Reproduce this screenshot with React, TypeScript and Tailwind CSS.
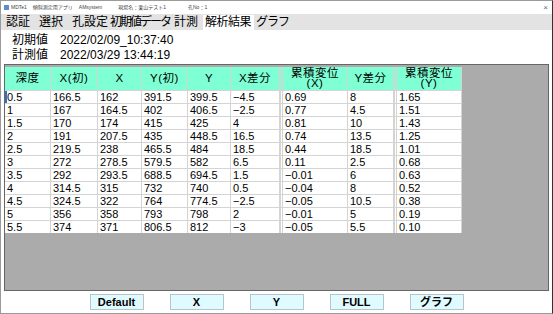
const rows = [
  ["0.5", "166.5", "162", "391.5", "399.5", "−4.5", "0.69", "8", "1.65"],
  ["1", "167", "164.5", "402", "406.5", "−2.5", "0.77", "4.5", "1.51"],
  ["1.5", "170", "174", "415", "425", "4", "0.81", "10", "1.43"],
  ["2", "191", "207.5", "435", "448.5", "16.5", "0.74", "13.5", "1.25"],
  ["2.5", "219.5", "238", "465.5", "484", "18.5", "0.44", "18.5", "1.01"],
  ["3", "272", "278.5", "579.5", "582", "6.5", "0.11", "2.5", "0.68"],
  ["3.5", "292", "293.5", "688.5", "694.5", "1.5", "−0.01", "6", "0.63"],
  ["4", "314.5", "315", "732", "740", "0.5", "−0.04", "8", "0.52"],
  ["4.5", "324.5", "322", "764", "774.5", "−2.5", "−0.05", "10.5", "0.38"],
  ["5", "356", "358", "793", "798", "2", "−0.01", "5", "0.19"],
  ["5.5", "374", "371", "806.5", "812", "−3", "−0.05", "5.5", "0.10"],
]

const cols = [
  { label: "深度", w: "w-[46px]" },
  { label: "X(初)", w: "w-[47px]" },
  { label: "X", w: "w-[44px]" },
  { label: "Y(初)", w: "w-[46px]" },
  { label: "Y", w: "w-[43px]" },
  { label: "X差分", w: "w-[49px]" },
  { label: "累積変位\n(X)", w: "w-[68px]", dbl: true },
  { label: "Y差分", w: "w-[46px]" },
  { label: "累積変位\n(Y)", w: "w-[68px]", dbl: true },
]

const tabs = [
  { t: "認証", w: "w-[33px]", tr: "tracking-[0px]" },
  { t: "選択", w: "w-[33px]", tr: "tracking-[0px]" },
  { t: "孔設定", w: "w-[38px]", tr: "tracking-[0px]" },
  { t: "初期値データ", w: "w-[64px]", tr: "tracking-[-2px]" },
  { t: "計測", w: "w-[31px]", tr: "tracking-[0px]" },
  { t: "解析結果", w: "w-[51px]", tr: "tracking-[-0.5px]", active: true },
  { t: "グラフ", w: "w-[31px]", tr: "tracking-[-1px]" },
]

const buttons = ["Default", "X", "Y", "FULL", "グラフ"]

function Cell({ text, w, dbl, header }: { text: string; w: string; dbl?: boolean; header?: boolean }) {
  return (
    <div
      className={`${w} shrink-0 border-r border-[#d4d4d4] ${dbl ? "border-l-[3px] border-l-[#d4d4d4] [border-left-style:double]" : ""} ${
        header
          ? "flex h-[23px] items-center justify-center whitespace-pre text-center text-[11.5px] leading-[10px] tracking-[0.5px]"
          : "h-[12px] whitespace-nowrap pl-[2px] text-[11px] leading-[12px]"
      }`}
    >
      {text}
    </div>
  )
}

export default function App() {
  return (
    <div
      className="flex h-[314px] w-[553px] flex-col overflow-hidden border border-[#9a9a9a] border-r-[#333] bg-white text-black"
      style={{ fontFamily: '"Liberation Sans", "Noto Sans CJK JP", sans-serif' }}
    >
      <div className="flex h-[13px] shrink-0 items-center pl-[3px] pr-[4px] text-[5px] text-[#444]">
        <span className="mr-[2px] inline-block h-[5px] w-[5px] bg-[#5b8bd0]" />
        <span className="mr-[6px]">MDTe1</span>
        <span className="mr-[6px]">傾斜測定用アプリ</span>
        <span className="mr-[16px]">AMsystem</span>
        <span className="mr-[22px]">現場名：栗山テスト1</span>
        <span>孔No：1</span>
        <span className="ml-auto text-[8px] text-[#666]">×</span>
      </div>
      <div className="flex h-[16px] shrink-0 items-end bg-[#e3e3e3] pl-[3px] text-[12px] leading-[15px]">
        {tabs.map((t) => (
          <div
            key={t.t}
            className={`${t.w} ${t.tr} h-[15px] shrink-0 whitespace-nowrap pl-[2px] ${t.active ? "bg-white" : ""}`}
          >
            {t.t}
          </div>
        ))}
      </div>
      <div className="shrink-0 px-[11px] pt-[3px] text-[12px] leading-[15px]">
        <div className="flex">
          <span className="w-[48px]">初期値</span>
          <span>2022/02/09_10:37:40</span>
        </div>
        <div className="flex">
          <span className="w-[48px]">計測値</span>
          <span>2022/03/29 13:44:19</span>
        </div>
      </div>
      <div className="mx-[3px] mt-[1px] h-[227px] shrink-0 border border-[#666] bg-[#ababab]">
        <div className="inline-flex flex-col bg-white">
          <div className="flex bg-[#7fffd4]">
            {cols.map((c) => (
              <Cell key={c.label} text={c.label} w={c.w} dbl={c.dbl} header />
            ))}
          </div>
          {rows.map((r, i) => (
            <div key={i} className="relative flex border-t border-[#d4d4d4]">
              {i === 0 && <span className="absolute left-0 top-0 h-[12px] w-[2px] bg-[#2a6fd6]" />}
              {r.map((v, j) => (
                <Cell key={j} text={v} w={cols[j].w} dbl={cols[j].dbl} />
              ))}
            </div>
          ))}
        </div>
      </div>
      <div className="flex shrink-0 justify-center gap-[26px] pt-[3px]">
        {buttons.map((b) => (
          <button
            key={b}
            className="h-[16px] w-[54px] border border-[#b8c4c8] bg-[#e0fbff] text-[11px] font-bold leading-[14px]"
          >
            {b}
          </button>
        ))}
      </div>
    </div>
  )
}
